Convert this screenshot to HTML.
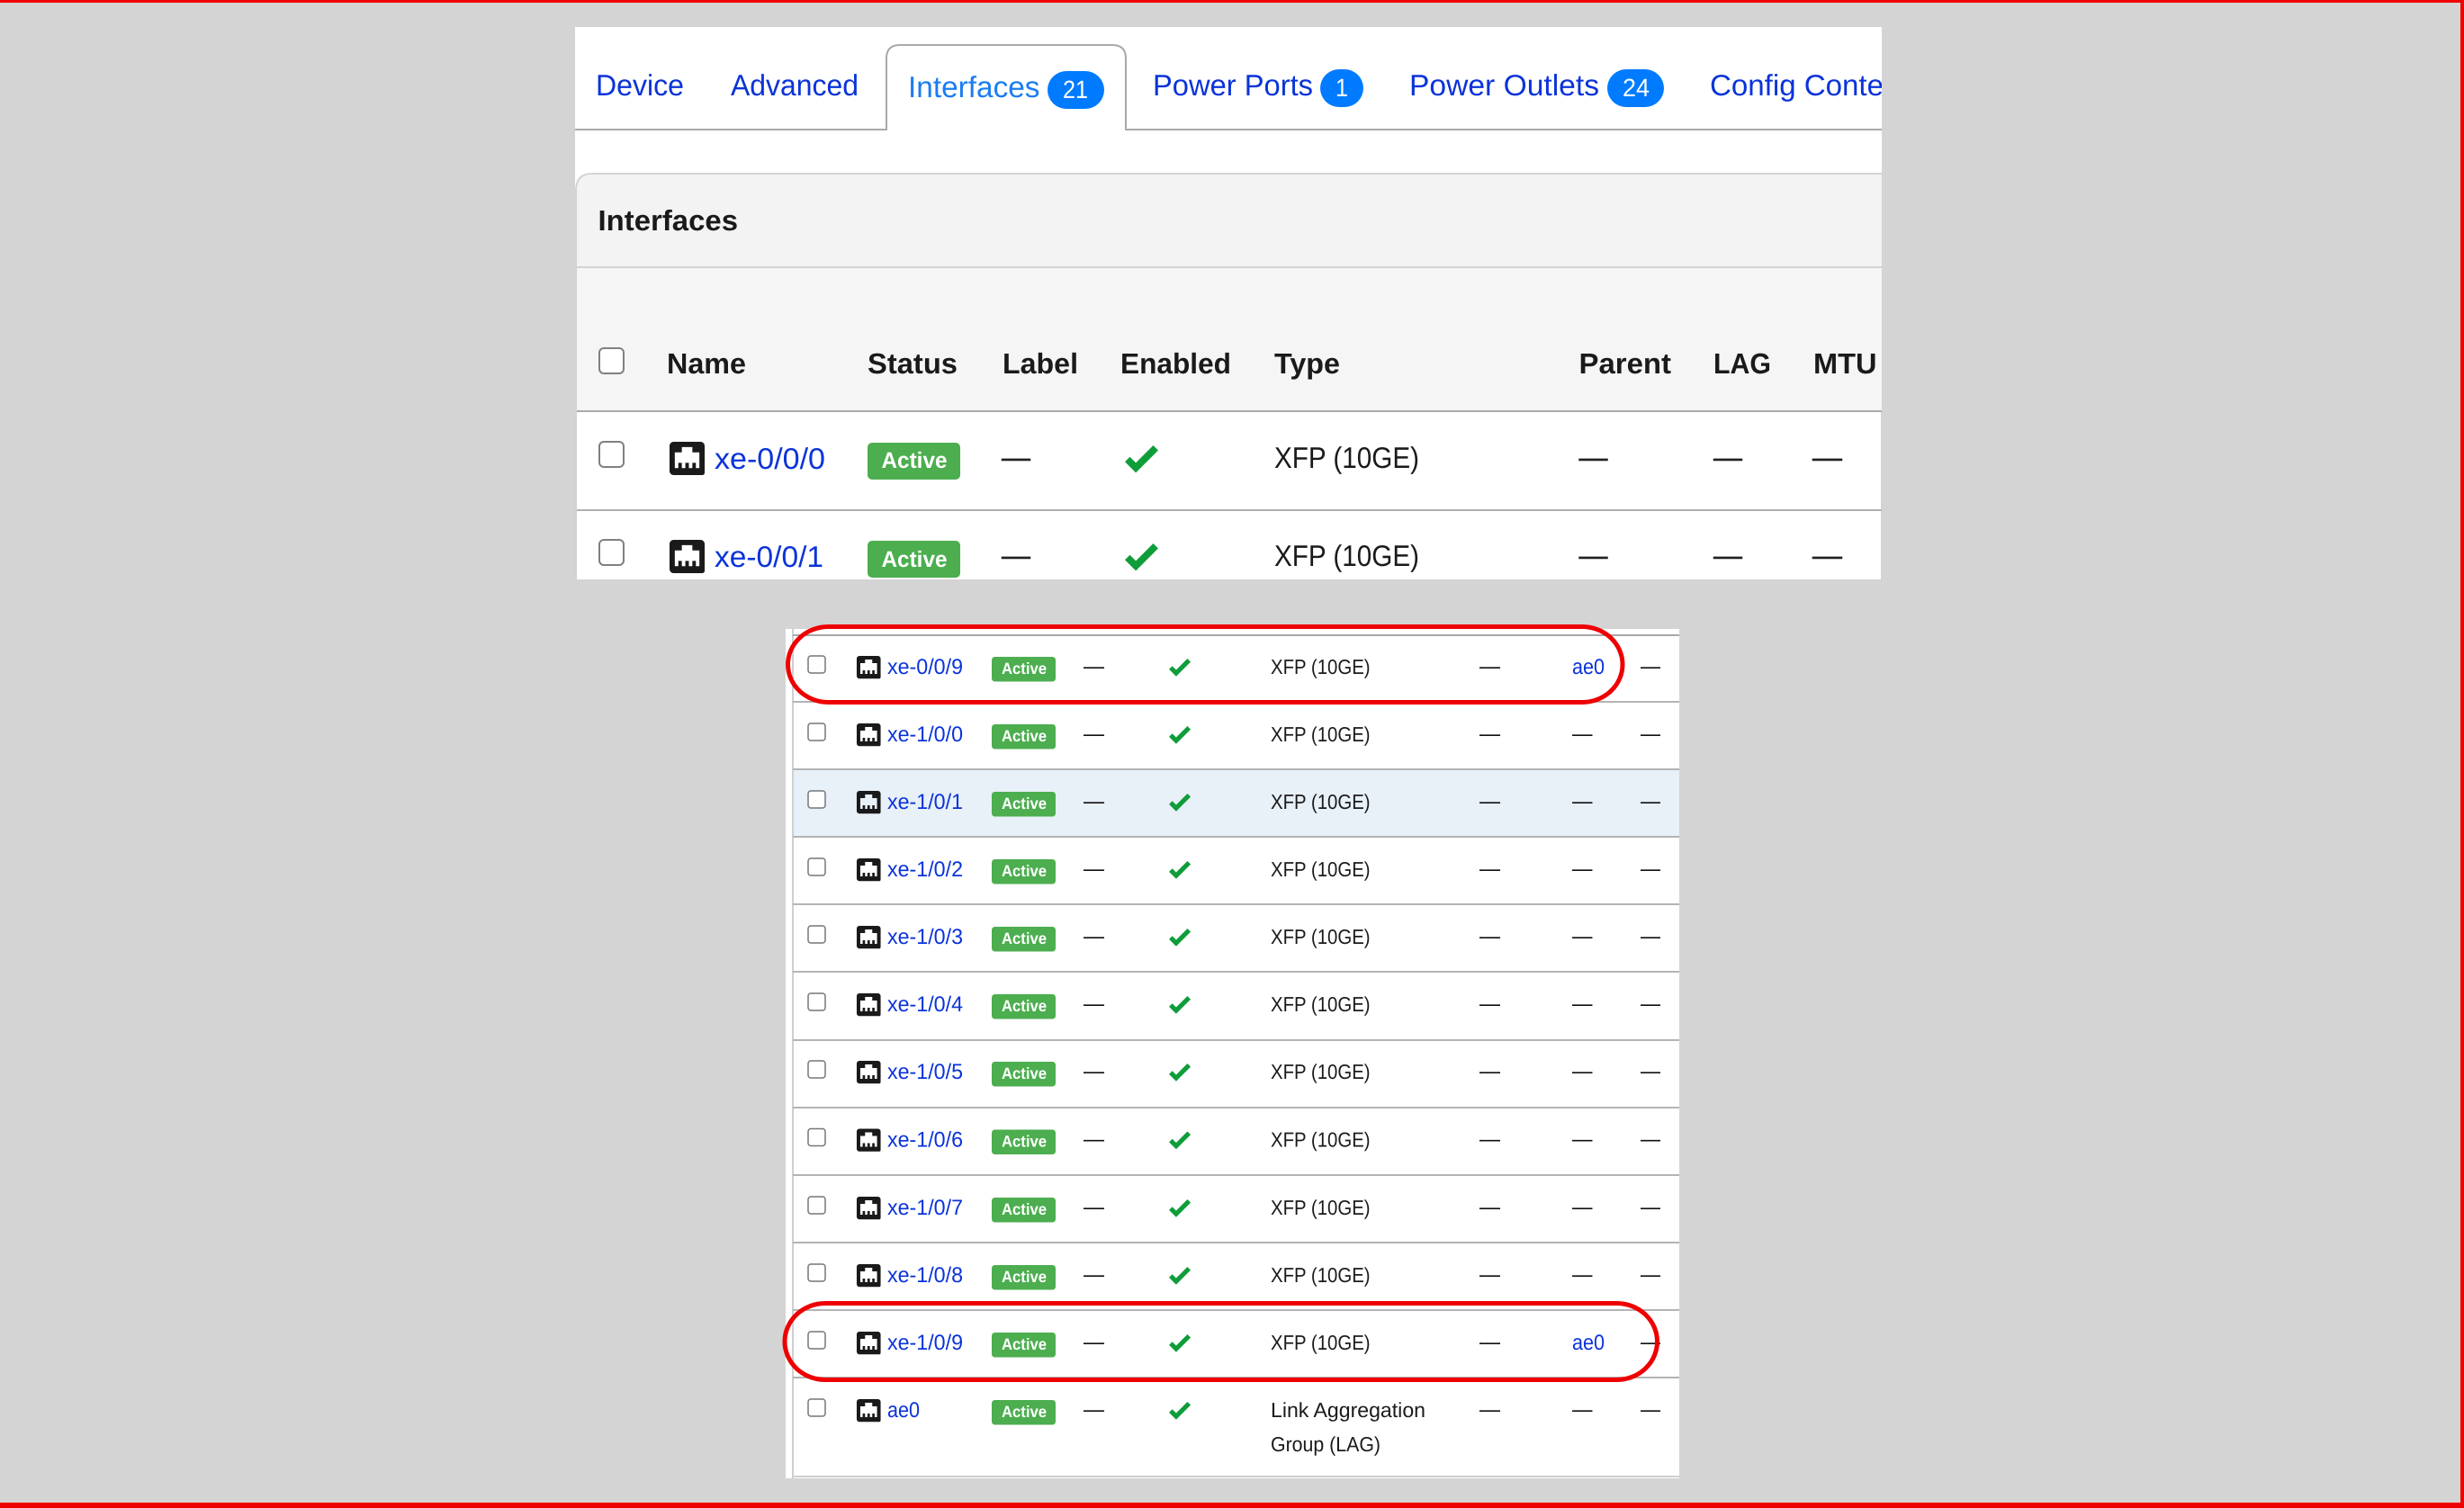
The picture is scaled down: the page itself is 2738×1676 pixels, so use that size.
<!DOCTYPE html>
<html lang="en">
<head>
<meta charset="utf-8">
<title>Interfaces</title>
<style>
html,body{margin:0;padding:0;background:#d4d4d4;width:2738px;height:1676px;overflow:hidden}
svg{display:block}
text{font-family:"Liberation Sans",sans-serif;text-rendering:geometricPrecision}
.tab{font-size:33px;fill:#0a33d9}
.bdg{font-size:28px;fill:#fff}
.h{font-size:32px;font-weight:700;fill:#1a1a1a}
.u{font-size:33px;fill:#0a33d9}
.ut{font-size:33px;fill:#1a1a1a}
.ud{font-size:32px;fill:#222;stroke:#222;stroke-width:.5}
.ua{font-size:25px;font-weight:700;fill:#fff}
.l{font-size:24px;fill:#0a33d9}
.t{font-size:23px;fill:#1a1a1a}
.d{font-size:23px;fill:#111}
.a{font-size:18px;font-weight:700;fill:#fff}
</style>
</head>
<body>
<svg width="2738" height="1676" viewBox="0 0 2738 1676" xmlns="http://www.w3.org/2000/svg">
<defs>
<clipPath id="top"><rect x="639" y="30" width="1452" height="615"/></clipPath>
<path id="eth" fill="#1a1a1a" fill-rule="evenodd" d="M7,15H9V18H11V15H13V18H15V15H17V18H19V9H15V6H9V9H5V18H7V15M4.38,3H19.63C20.94,3 22,4.06 22,5.38V20.63A1.37,1.37 0 0,1 20.63,22H4.38C3.06,22 2,20.94 2,19.63V5.38C2,4.06 3.06,3 4.38,3Z"/>
<path id="chk" fill="#0f9d3a" d="M9,20.42L2.79,14.21L5.62,11.38L9,14.77L18.88,4.88L21.71,7.71L9,20.42Z"/>
<g id="ub">
<rect x="666" y="33" width="27" height="28" rx="5" fill="#fff" stroke="#808080" stroke-width="2"/>
<use href="#eth" transform="translate(740.1,27.15) scale(1.95)"/>
<rect x="964" y="34" width="103" height="41" rx="5" fill="#4cae4f"/>
<use href="#chk" transform="translate(1244.55,27.46) scale(1.955)"/>
</g>
<g id="lb">
<rect x="898" y="24" width="19" height="19" rx="3" fill="#fff" stroke="#777" stroke-width="1.5"/>
<use href="#eth" transform="translate(949.3,20) scale(1.33)"/>
<rect x="1102" y="25" width="71" height="27.5" rx="3.5" fill="#4cae4f"/>
<use href="#chk" transform="translate(1295.5,20.8) scale(1.27)"/>
</g>
</defs>

<rect width="2738" height="1676" fill="#d4d4d4"/>

<!-- upper panel -->
<g clip-path="url(#top)">
<rect x="639" y="30" width="1452" height="615" fill="#fff"/>
<rect x="639" y="143" width="1452" height="2" fill="#a9a9a9"/>
<path d="M985 145V65Q985 50 1000 50H1236Q1251 50 1251 65V145" fill="#fff" stroke="#a9a9a9" stroke-width="2"/>
<rect x="986" y="143" width="264" height="3" fill="#fff"/>
<text class="tab" x="662" y="106" textLength="98" lengthAdjust="spacingAndGlyphs">Device</text>
<text class="tab" x="812" y="106" textLength="142" lengthAdjust="spacingAndGlyphs">Advanced</text>
<text class="tab" x="1009" y="108" textLength="146.500" lengthAdjust="spacingAndGlyphs" style="fill:#1a7df0">Interfaces</text>
<rect x="1164" y="79" width="63" height="42" rx="21" fill="#007bff"/>
<text class="bdg" x="1181" y="109" textLength="28" lengthAdjust="spacingAndGlyphs">21</text>
<text class="tab" x="1281" y="106" textLength="178" lengthAdjust="spacingAndGlyphs">Power Ports</text>
<rect x="1467" y="77" width="48" height="42" rx="21" fill="#007bff"/>
<text class="bdg" x="1484" y="107" textLength="14" lengthAdjust="spacingAndGlyphs">1</text>
<text class="tab" x="1566" y="106" textLength="211" lengthAdjust="spacingAndGlyphs">Power Outlets</text>
<rect x="1786" y="77" width="63" height="42" rx="21" fill="#007bff"/>
<text class="bdg" x="1803" y="107" textLength="30" lengthAdjust="spacingAndGlyphs">24</text>
<text class="tab" x="1900" y="106" textLength="193" lengthAdjust="spacingAndGlyphs">Config Conte</text>

<path d="M640 645V212Q640 193 658 193H2091V645Z" fill="#fff" stroke="#d2d2d2" stroke-width="2"/>
<path d="M641 297V212Q641 194 658 194H2091V297Z" fill="#f3f3f3"/>
<rect x="641" y="296" width="1450" height="2" fill="#d2d2d2"/>
<rect x="641" y="298" width="1450" height="158" fill="#f5f5f5"/>
<rect x="641" y="456" width="1450" height="2" fill="#aaa"/>
<rect x="641" y="566" width="1450" height="2" fill="#b0b0b0"/>
<text class="h" x="664.500" y="256" textLength="155.500" lengthAdjust="spacingAndGlyphs">Interfaces</text>
<rect x="666" y="387" width="27" height="28" rx="5" fill="#fff" stroke="#808080" stroke-width="2"/>
<text class="h" x="741" y="415" textLength="88" lengthAdjust="spacingAndGlyphs">Name</text>
<text class="h" x="964" y="415" textLength="100" lengthAdjust="spacingAndGlyphs">Status</text>
<text class="h" x="1114" y="415" textLength="84" lengthAdjust="spacingAndGlyphs">Label</text>
<text class="h" x="1245" y="415" textLength="123" lengthAdjust="spacingAndGlyphs">Enabled</text>
<text class="h" x="1416" y="415" textLength="73" lengthAdjust="spacingAndGlyphs">Type</text>
<text class="h" x="1754.500" y="415" textLength="102.500" lengthAdjust="spacingAndGlyphs">Parent</text>
<text class="h" x="1904" y="415" textLength="64" lengthAdjust="spacingAndGlyphs">LAG</text>
<text class="h" x="2015" y="415" textLength="70.500" lengthAdjust="spacingAndGlyphs">MTU</text>

<g transform="translate(0,458)">
<use href="#ub"/>
<text class="u" x="794" y="63" textLength="123" lengthAdjust="spacingAndGlyphs">xe-0/0/0</text>
<text class="ua" x="979.500" y="62" textLength="73" lengthAdjust="spacingAndGlyphs">Active</text>
<text class="ud" x="1113" y="61" textLength="32" lengthAdjust="spacingAndGlyphs">—</text>
<text class="ut" x="1416" y="62" textLength="161" lengthAdjust="spacingAndGlyphs">XFP (10GE)</text>
<text class="ud" x="1754.500" y="61" textLength="32" lengthAdjust="spacingAndGlyphs">—</text>
<text class="ud" x="1904" y="61" textLength="32" lengthAdjust="spacingAndGlyphs">—</text>
<text class="ud" x="2014" y="61" textLength="33" lengthAdjust="spacingAndGlyphs">—</text>
</g>
<g transform="translate(0,567)">
<use href="#ub"/>
<text class="u" x="794" y="63" textLength="121" lengthAdjust="spacingAndGlyphs">xe-0/0/1</text>
<text class="ua" x="979.500" y="63" textLength="73" lengthAdjust="spacingAndGlyphs">Active</text>
<text class="ud" x="1113" y="61" textLength="32" lengthAdjust="spacingAndGlyphs">—</text>
<text class="ut" x="1416" y="62" textLength="161" lengthAdjust="spacingAndGlyphs">XFP (10GE)</text>
<text class="ud" x="1754.500" y="61" textLength="32" lengthAdjust="spacingAndGlyphs">—</text>
<text class="ud" x="1904" y="61" textLength="32" lengthAdjust="spacingAndGlyphs">—</text>
<text class="ud" x="2014" y="61" textLength="33" lengthAdjust="spacingAndGlyphs">—</text>
</g>
</g>

<!-- lower panel -->
<rect x="873" y="699" width="993" height="944" fill="#fff"/>
<rect x="880" y="699" width="2" height="944" fill="#cfcfcf"/>
<rect x="882" y="856" width="984" height="74" fill="#e8f0f8"/>
<g fill="#b4b4b4">
<rect x="881" y="705" width="985" height="2" fill="#a8a8a8"/>
<rect x="881" y="779" width="985" height="2"/>
<rect x="881" y="854" width="985" height="2"/>
<rect x="881" y="929" width="985" height="2"/>
<rect x="881" y="1004" width="985" height="2"/>
<rect x="881" y="1079" width="985" height="2"/>
<rect x="881" y="1155" width="985" height="2"/>
<rect x="881" y="1230" width="985" height="2"/>
<rect x="881" y="1305" width="985" height="2"/>
<rect x="881" y="1380" width="985" height="2"/>
<rect x="881" y="1455" width="985" height="2"/>
<rect x="881" y="1530" width="985" height="2"/>
<rect x="881" y="1640" width="985" height="2" fill="#cfcfcf"/>
</g>

<g transform="translate(0,705)"><use href="#lb"/>
<text class="l" x="986" y="44" textLength="84" lengthAdjust="spacingAndGlyphs">xe-0/0/9</text>
<text class="a" x="1113" y="44" textLength="50" lengthAdjust="spacingAndGlyphs">Active</text>
<text class="d" x="1204" y="43" textLength="23" lengthAdjust="spacingAndGlyphs">—</text>
<text class="t" x="1412" y="44" textLength="110.600" lengthAdjust="spacingAndGlyphs">XFP (10GE)</text>
<text class="d" x="1644" y="43" textLength="23" lengthAdjust="spacingAndGlyphs">—</text>
<text class="l" x="1747" y="44" textLength="36" lengthAdjust="spacingAndGlyphs">ae0</text>
<text class="d" x="1823" y="43" textLength="22" lengthAdjust="spacingAndGlyphs">—</text>
</g>
<g transform="translate(0,780)"><use href="#lb"/>
<text class="l" x="986" y="44" textLength="84" lengthAdjust="spacingAndGlyphs">xe-1/0/0</text>
<text class="a" x="1113" y="44" textLength="50" lengthAdjust="spacingAndGlyphs">Active</text>
<text class="d" x="1204" y="43" textLength="23" lengthAdjust="spacingAndGlyphs">—</text>
<text class="t" x="1412" y="44" textLength="110.600" lengthAdjust="spacingAndGlyphs">XFP (10GE)</text>
<text class="d" x="1644" y="43" textLength="23" lengthAdjust="spacingAndGlyphs">—</text>
<text class="d" x="1747" y="43" textLength="22.500" lengthAdjust="spacingAndGlyphs">—</text>
<text class="d" x="1823" y="43" textLength="22" lengthAdjust="spacingAndGlyphs">—</text>
</g>
<g transform="translate(0,855)"><use href="#lb"/>
<text class="l" x="986" y="44" textLength="84" lengthAdjust="spacingAndGlyphs">xe-1/0/1</text>
<text class="a" x="1113" y="44" textLength="50" lengthAdjust="spacingAndGlyphs">Active</text>
<text class="d" x="1204" y="43" textLength="23" lengthAdjust="spacingAndGlyphs">—</text>
<text class="t" x="1412" y="44" textLength="110.600" lengthAdjust="spacingAndGlyphs">XFP (10GE)</text>
<text class="d" x="1644" y="43" textLength="23" lengthAdjust="spacingAndGlyphs">—</text>
<text class="d" x="1747" y="43" textLength="22.500" lengthAdjust="spacingAndGlyphs">—</text>
<text class="d" x="1823" y="43" textLength="22" lengthAdjust="spacingAndGlyphs">—</text>
</g>
<g transform="translate(0,930)"><use href="#lb"/>
<text class="l" x="986" y="44" textLength="84" lengthAdjust="spacingAndGlyphs">xe-1/0/2</text>
<text class="a" x="1113" y="44" textLength="50" lengthAdjust="spacingAndGlyphs">Active</text>
<text class="d" x="1204" y="43" textLength="23" lengthAdjust="spacingAndGlyphs">—</text>
<text class="t" x="1412" y="44" textLength="110.600" lengthAdjust="spacingAndGlyphs">XFP (10GE)</text>
<text class="d" x="1644" y="43" textLength="23" lengthAdjust="spacingAndGlyphs">—</text>
<text class="d" x="1747" y="43" textLength="22.500" lengthAdjust="spacingAndGlyphs">—</text>
<text class="d" x="1823" y="43" textLength="22" lengthAdjust="spacingAndGlyphs">—</text>
</g>
<g transform="translate(0,1005)"><use href="#lb"/>
<text class="l" x="986" y="44" textLength="84" lengthAdjust="spacingAndGlyphs">xe-1/0/3</text>
<text class="a" x="1113" y="44" textLength="50" lengthAdjust="spacingAndGlyphs">Active</text>
<text class="d" x="1204" y="43" textLength="23" lengthAdjust="spacingAndGlyphs">—</text>
<text class="t" x="1412" y="44" textLength="110.600" lengthAdjust="spacingAndGlyphs">XFP (10GE)</text>
<text class="d" x="1644" y="43" textLength="23" lengthAdjust="spacingAndGlyphs">—</text>
<text class="d" x="1747" y="43" textLength="22.500" lengthAdjust="spacingAndGlyphs">—</text>
<text class="d" x="1823" y="43" textLength="22" lengthAdjust="spacingAndGlyphs">—</text>
</g>
<g transform="translate(0,1080)"><use href="#lb"/>
<text class="l" x="986" y="44" textLength="84" lengthAdjust="spacingAndGlyphs">xe-1/0/4</text>
<text class="a" x="1113" y="44" textLength="50" lengthAdjust="spacingAndGlyphs">Active</text>
<text class="d" x="1204" y="43" textLength="23" lengthAdjust="spacingAndGlyphs">—</text>
<text class="t" x="1412" y="44" textLength="110.600" lengthAdjust="spacingAndGlyphs">XFP (10GE)</text>
<text class="d" x="1644" y="43" textLength="23" lengthAdjust="spacingAndGlyphs">—</text>
<text class="d" x="1747" y="43" textLength="22.500" lengthAdjust="spacingAndGlyphs">—</text>
<text class="d" x="1823" y="43" textLength="22" lengthAdjust="spacingAndGlyphs">—</text>
</g>
<g transform="translate(0,1155)"><use href="#lb"/>
<text class="l" x="986" y="44" textLength="84" lengthAdjust="spacingAndGlyphs">xe-1/0/5</text>
<text class="a" x="1113" y="44" textLength="50" lengthAdjust="spacingAndGlyphs">Active</text>
<text class="d" x="1204" y="43" textLength="23" lengthAdjust="spacingAndGlyphs">—</text>
<text class="t" x="1412" y="44" textLength="110.600" lengthAdjust="spacingAndGlyphs">XFP (10GE)</text>
<text class="d" x="1644" y="43" textLength="23" lengthAdjust="spacingAndGlyphs">—</text>
<text class="d" x="1747" y="43" textLength="22.500" lengthAdjust="spacingAndGlyphs">—</text>
<text class="d" x="1823" y="43" textLength="22" lengthAdjust="spacingAndGlyphs">—</text>
</g>
<g transform="translate(0,1230.500)"><use href="#lb"/>
<text class="l" x="986" y="44" textLength="84" lengthAdjust="spacingAndGlyphs">xe-1/0/6</text>
<text class="a" x="1113" y="44" textLength="50" lengthAdjust="spacingAndGlyphs">Active</text>
<text class="d" x="1204" y="43" textLength="23" lengthAdjust="spacingAndGlyphs">—</text>
<text class="t" x="1412" y="44" textLength="110.600" lengthAdjust="spacingAndGlyphs">XFP (10GE)</text>
<text class="d" x="1644" y="43" textLength="23" lengthAdjust="spacingAndGlyphs">—</text>
<text class="d" x="1747" y="43" textLength="22.500" lengthAdjust="spacingAndGlyphs">—</text>
<text class="d" x="1823" y="43" textLength="22" lengthAdjust="spacingAndGlyphs">—</text>
</g>
<g transform="translate(0,1306)"><use href="#lb"/>
<text class="l" x="986" y="44" textLength="84" lengthAdjust="spacingAndGlyphs">xe-1/0/7</text>
<text class="a" x="1113" y="44" textLength="50" lengthAdjust="spacingAndGlyphs">Active</text>
<text class="d" x="1204" y="43" textLength="23" lengthAdjust="spacingAndGlyphs">—</text>
<text class="t" x="1412" y="44" textLength="110.600" lengthAdjust="spacingAndGlyphs">XFP (10GE)</text>
<text class="d" x="1644" y="43" textLength="23" lengthAdjust="spacingAndGlyphs">—</text>
<text class="d" x="1747" y="43" textLength="22.500" lengthAdjust="spacingAndGlyphs">—</text>
<text class="d" x="1823" y="43" textLength="22" lengthAdjust="spacingAndGlyphs">—</text>
</g>
<g transform="translate(0,1381)"><use href="#lb"/>
<text class="l" x="986" y="44" textLength="84" lengthAdjust="spacingAndGlyphs">xe-1/0/8</text>
<text class="a" x="1113" y="44" textLength="50" lengthAdjust="spacingAndGlyphs">Active</text>
<text class="d" x="1204" y="43" textLength="23" lengthAdjust="spacingAndGlyphs">—</text>
<text class="t" x="1412" y="44" textLength="110.600" lengthAdjust="spacingAndGlyphs">XFP (10GE)</text>
<text class="d" x="1644" y="43" textLength="23" lengthAdjust="spacingAndGlyphs">—</text>
<text class="d" x="1747" y="43" textLength="22.500" lengthAdjust="spacingAndGlyphs">—</text>
<text class="d" x="1823" y="43" textLength="22" lengthAdjust="spacingAndGlyphs">—</text>
</g>
<g transform="translate(0,1456)"><use href="#lb"/>
<text class="l" x="986" y="44" textLength="84" lengthAdjust="spacingAndGlyphs">xe-1/0/9</text>
<text class="a" x="1113" y="44" textLength="50" lengthAdjust="spacingAndGlyphs">Active</text>
<text class="d" x="1204" y="43" textLength="23" lengthAdjust="spacingAndGlyphs">—</text>
<text class="t" x="1412" y="44" textLength="110.600" lengthAdjust="spacingAndGlyphs">XFP (10GE)</text>
<text class="d" x="1644" y="43" textLength="23" lengthAdjust="spacingAndGlyphs">—</text>
<text class="l" x="1747" y="44" textLength="36" lengthAdjust="spacingAndGlyphs">ae0</text>
<text class="d" x="1823" y="43" textLength="22" lengthAdjust="spacingAndGlyphs">—</text>
</g>
<g transform="translate(0,1531)"><use href="#lb"/>
<text class="l" x="986" y="44" textLength="36" lengthAdjust="spacingAndGlyphs">ae0</text>
<text class="a" x="1113" y="44" textLength="50" lengthAdjust="spacingAndGlyphs">Active</text>
<text class="d" x="1204" y="43" textLength="23" lengthAdjust="spacingAndGlyphs">—</text>
<text class="t" x="1412" y="44" textLength="172" lengthAdjust="spacingAndGlyphs">Link Aggregation</text>
<text class="t" x="1412" y="82" textLength="122" lengthAdjust="spacingAndGlyphs">Group (LAG)</text>
<text class="d" x="1644" y="43" textLength="23" lengthAdjust="spacingAndGlyphs">—</text>
<text class="d" x="1747" y="43" textLength="22.500" lengthAdjust="spacingAndGlyphs">—</text>
<text class="d" x="1823" y="43" textLength="22" lengthAdjust="spacingAndGlyphs">—</text>
</g>

<!-- red highlights -->
<rect x="875.500" y="696.500" width="927.500" height="84" rx="45" ry="42" fill="none" stroke="#ee0000" stroke-width="5"/>
<rect x="872" y="1448.500" width="969.500" height="85" rx="45" ry="42.500" fill="none" stroke="#ee0000" stroke-width="5"/>

<!-- outer frame -->
<rect x="0" y="0" width="2738" height="3" fill="#f00000"/>
<rect x="2734" y="0" width="4" height="1676" fill="#f00000"/>
<rect x="0" y="1670" width="2738" height="6" fill="#f00000"/>
</svg>
</body>
</html>
